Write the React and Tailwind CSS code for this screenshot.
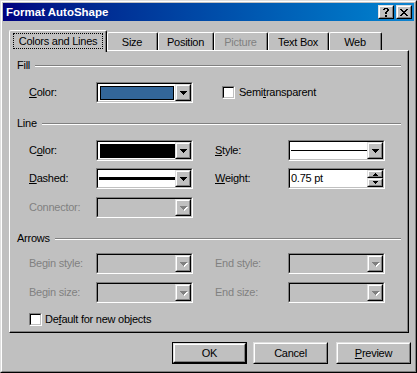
import React from 'react';

function Sunken({ className = '', inner = '', children }) {
  return (
    <div className={`border border-t-[#808080] border-l-[#808080] border-r-white border-b-white ${className}`}>
      <div className={`h-full border border-t-black border-l-black border-r-[#c0c0c0] border-b-[#c0c0c0] ${inner}`}>{children}</div>
    </div>
  );
}

function Raised({ className = '', inner = '', children }) {
  return (
    <div className={`border border-t-[#dfdfdf] border-l-[#dfdfdf] border-r-black border-b-black ${className}`}>
      <div className={`h-full border border-t-white border-l-white border-r-[#808080] border-b-[#808080] bg-[#c0c0c0] ${inner}`}>{children}</div>
    </div>
  );
}

const ARROW = 'M0 0h7v1H0zM1 1h5v1H1zM2 2h3v1H2zM3 3h1v1H3z';

function Arrow({ disabled }) {
  return (
    <svg width="8" height="5" viewBox="0 0 8 5" shapeRendering="crispEdges" className="block">
      {disabled && <path d={ARROW} fill="#ffffff" transform="translate(1 1)" />}
      <path d={ARROW} fill={disabled ? '#808080' : '#000000'} />
    </svg>
  );
}

function Combo({ children, disabled }) {
  return (
    <Sunken className="w-[97px] h-[21px] shrink-0" inner={`flex ${disabled ? 'bg-[#c0c0c0]' : 'bg-white'}`}>
      <div className="flex-1 flex items-center">{children}</div>
      <Raised className="w-[16px] h-full" inner="flex items-center justify-center pl-px pt-px">
        <Arrow disabled={disabled} />
      </Raised>
    </Sunken>
  );
}

function Check() {
  return <Sunken className="w-[13px] h-[13px] shrink-0" inner="bg-white" />;
}

function Header({ title, className = '' }) {
  return (
    <div className={`flex items-center h-[13px] pl-[7px] pr-[6px] shrink-0 ${className}`}>
      <span>{title}</span>
      <div className="flex-1 ml-[5px] h-[2px] border-t border-t-[#808080] border-b border-b-white" />
    </div>
  );
}

function U({ children }) {
  return <span className="underline underline-offset-[1px]">{children}</span>;
}

function CapBtn({ className = '', children }) {
  return (
    <Raised className={`w-[16px] h-[14px] shrink-0 ${className}`} inner="flex items-center justify-center">
      {children}
    </Raised>
  );
}

function Row({ className = '', children }) {
  return <div className={`flex items-center h-[21px] pl-[19px] shrink-0 ${className}`}>{children}</div>;
}

function SpinBtn({ up, className = '' }) {
  return (
    <div className={`border border-t-[#dfdfdf] border-l-[#dfdfdf] border-r-black border-b-black ${className}`}>
      <div className="h-full border border-t-white border-l-white border-r-[#808080] border-b-[#808080] bg-[#c0c0c0] flex items-center justify-center">
        <svg width="5" height="3" viewBox="0 0 5 3" shapeRendering="crispEdges" className="block">
          <path d={up ? 'M2 0h1v1H2zM1 1h3v1H1zM0 2h5v1H0z' : 'M0 0h5v1H0zM1 1h3v1H1zM2 2h1v1H2z'} fill="#000" />
        </svg>
      </div>
    </div>
  );
}

function Tab({ className = '', disabled, children }) {
  return (
    <div className={`h-[18px] shrink-0 rounded-t-[2px] border-t border-l border-r border-t-white border-l-white border-r-black ${className}`}>
      <div className={`h-full border-r border-r-[#808080] flex justify-center pt-[3px] ${disabled ? 'text-[#808080]' : ''}`}>
        {children}
      </div>
    </div>
  );
}

function Button({ className = '', def, children }) {
  const body = (
    <Raised className={def ? 'w-full h-full' : `w-[75px] h-[22px] ${className}`} inner="flex items-center justify-center">
      {children}
    </Raised>
  );
  if (def) {
    return <div className={`w-[75px] h-[22px] border border-black ${className}`}>{body}</div>;
  }
  return body;
}

export default function App() {
  return (
    <div className="w-[417px] h-[373px] border border-t-[#dfdfdf] border-l-[#dfdfdf] border-r-black border-b-black font-['Liberation_Sans',Arial,sans-serif] text-[11px] leading-[13px] tracking-[-0.25px] text-black select-none">
      <div className="h-full border border-t-white border-l-white border-r-[#808080] border-b-[#808080] bg-[#c0c0c0] p-px flex flex-col">
        <div className="h-[18px] shrink-0 flex items-center bg-linear-to-r from-[#000080] to-[#1084d0] pl-[3px] pr-[2px]">
          <span className="flex-1 text-white font-bold text-[11.5px] tracking-normal">Format AutoShape</span>
          <CapBtn>
            <svg width="6" height="9" viewBox="0 0 6 9" shapeRendering="crispEdges" className="block">
              <path d="M1 0h4v1H1zM0 1h2v1H0zM4 1h2v1H4zM4 2h2v1H4zM3 3h2v1H3zM2 4h2v2H2zM2 7h2v2H2z" fill="#000" />
            </svg>
          </CapBtn>
          <CapBtn className="ml-[2px]">
            <svg width="8" height="7" viewBox="0 0 8 7" shapeRendering="crispEdges" className="block">
              <path d="M0 0h2v1H0zM6 0h2v1H6zM1 1h2v1H1zM5 1h2v1H5zM2 2h4v1H2zM3 3h2v1H3zM2 4h4v1H2zM1 5h2v1H1zM5 5h2v1H5zM0 6h2v1H0zM6 6h2v1H6z" fill="#000" />
            </svg>
          </CapBtn>
        </div>

        <div className="flex flex-col pl-[6px] pt-[9px]">
          <div className="flex items-end h-[20px]">
            <div className="relative z-10 w-[98px] h-[22px] -mb-[2px] shrink-0 rounded-t-[2px] border-t border-l border-r border-t-white border-l-white border-r-black bg-[#c0c0c0]">
              <div className="h-full border-r border-r-[#808080] pt-[2px] pl-[3px]">
                <div className="w-[90px] h-[16px] border border-dotted border-black flex items-center justify-center">
                  Colors and Lines
                </div>
              </div>
            </div>
            <Tab className="w-[51px]">Size</Tab>
            <Tab className="w-[56px]">Position</Tab>
            <Tab className="w-[54px]" disabled>Picture</Tab>
            <Tab className="w-[61px]">Text Box</Tab>
            <Tab className="w-[53px]">Web</Tab>
          </div>

          <div className="w-[400px] h-[283px] border border-t-white border-l-white border-r-black border-b-black">
            <div className="h-full border-r border-b border-r-[#808080] border-b-[#808080] flex flex-col">
              <Header title="Fill" className="mt-[8px]" />
              <Row className="mt-[10px]">
                <div className="w-[67px] shrink-0"><U>C</U>olor:</div>
                <Combo>
                  <div className="ml-[2px] w-[74px] h-[14px] border border-black bg-[#336699]" />
                </Combo>
                <div className="ml-[29px] flex items-center">
                  <Check />
                  <span className="ml-[4px]">Semi<U>t</U>ransparent</span>
                </div>
              </Row>

              <Header title="Line" className="mt-[14px]" />
              <Row className="mt-[10px]">
                <div className="w-[67px] shrink-0">C<U>o</U>lor:</div>
                <Combo>
                  <div className="ml-[2px] w-[75px] h-[14px] bg-black" />
                </Combo>
                <div className="ml-[22px] w-[73px] shrink-0"><U>S</U>tyle:</div>
                <Combo>
                  <div className="ml-px w-[76px] h-px bg-black" />
                </Combo>
              </Row>
              <Row className="mt-[7px]">
                <div className="w-[67px] shrink-0"><U>D</U>ashed:</div>
                <Combo>
                  <div className="ml-px w-[76px] h-[3px] bg-black" />
                </Combo>
                <div className="ml-[22px] w-[73px] shrink-0"><U>W</U>eight:</div>
                <Sunken className="w-[97px] h-[21px] shrink-0" inner="flex bg-white">
                  <div className="flex-1 flex items-center pl-px">0.75 pt</div>
                  <div className="w-[16px] flex flex-col">
                    <SpinBtn up className="h-[8px]" />
                    <SpinBtn className="h-[9px]" />
                  </div>
                </Sunken>
              </Row>
              <Row className="mt-[8px]">
                <div className="w-[67px] shrink-0 text-[#808080]">Connector:</div>
                <Combo disabled />
              </Row>

              <Header title="Arrows" className="mt-[14px]" />
              <Row className="mt-[8px] text-[#808080]">
                <div className="w-[67px] shrink-0">Begin style:</div>
                <Combo disabled />
                <div className="ml-[22px] w-[73px] shrink-0">End style:</div>
                <Combo disabled />
              </Row>
              <Row className="mt-[8px] text-[#808080]">
                <div className="w-[67px] shrink-0">Begin size:</div>
                <Combo disabled />
                <div className="ml-[22px] w-[73px] shrink-0">End size:</div>
                <Combo disabled />
              </Row>
              <div className="flex items-center h-[13px] mt-[10px] pl-[19px]">
                <Check />
                <span className="ml-[3px]">De<U>f</U>ault for new objects</span>
              </div>
            </div>
          </div>

          <div className="flex mt-[9px] pl-[163px]">
            <Button def>OK</Button>
            <Button className="ml-[6px]">Cancel</Button>
            <Button className="ml-[8px]"><span><U>P</U>review</span></Button>
          </div>
        </div>
      </div>
    </div>
  );
}
